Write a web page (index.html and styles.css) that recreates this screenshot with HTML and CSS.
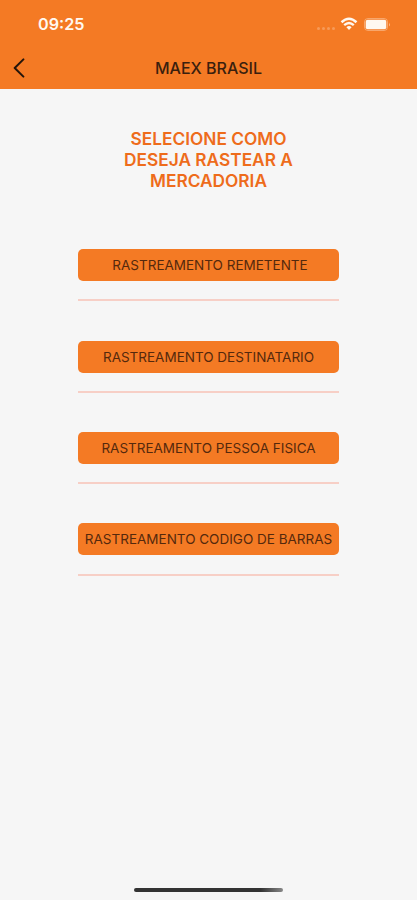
FILE: index.html
```
<!DOCTYPE html>
<html lang="pt-BR">
<head>
<meta charset="utf-8">
<meta name="viewport" content="width=device-width, initial-scale=1">
<title>MAEX BRASIL</title>
<link rel="stylesheet" href="styles.css">
</head>

<body>
<div class="screen">

<header class="header">
   <div class="status">
      <span class="clock">09:25</span>
      <div class="indicators">
         <span class="signal"><i></i><i></i><i></i><i></i></span>
         <svg class="wifi" width="18" height="14" viewBox="0 0 18 14">
            <path d="M1.5 5.2 Q9 -1.6 16.5 5.2" fill="none" stroke="currentColor" stroke-width="2.5" />
            <path d="M4.2 8.2 Q9 3.8 13.8 8.2" fill="none" stroke="currentColor" stroke-width="2.3" />
            <path d="M6.4 10.2 Q9 8 11.6 10.2 L9 13 Z" fill="currentColor" />
         </svg>
         <svg class="battery" width="27" height="13" viewBox="0 0 27 13">
            <rect x="0.5" y="0.5" width="23" height="12" rx="3.4" fill="none" stroke="currentColor" opacity="0.35" />
            <rect x="1.7" y="1.7" width="20.6" height="9.6" rx="2" fill="currentColor" />
            <path d="M25 4.5 Q26.6 6.5 25 8.5 Z" fill="currentColor" opacity="0.55" />
         </svg>
      </div>
   </div>
   <nav class="navbar">
      <a class="back" href="#" aria-label="Voltar">
         <svg width="12" height="20" viewBox="0 0 12 20">
            <path d="M10.4 1.4 L1.7 10 L10.4 18.6" fill="none" stroke="currentColor" stroke-width="2" stroke-linecap="round" stroke-linejoin="round" />
         </svg>
      </a>
      <h1 class="title">MAEX BRASIL</h1>
   </nav>
</header>

<main class="content">
   <h2 class="heading">SELECIONE COMO<br>DESEJA RASTEAR A<br>MERCADORIA</h2>
   <div class="options">
      <div class="option"><button class="btn remetente" type="button">RASTREAMENTO REMETENTE</button></div>
      <div class="option"><button class="btn destinatario" type="button">RASTREAMENTO DESTINATARIO</button></div>
      <div class="option"><button class="btn pessoa" type="button">RASTREAMENTO PESSOA FISICA</button></div>
      <div class="option"><button class="btn codigo" type="button">RASTREAMENTO CODIGO DE BARRAS</button></div>
   </div>
</main>

<div class="home_bar"></div>

</div>
</body>
</html>
```

FILE: styles.css
```
body         {margin: 0; background-color: #f6f6f6;
              font-family: Inter, "Liberation Sans", sans-serif}

.screen      {display: flex; flex-direction: column; height: 900px; overflow: hidden}

/* status bar and navigation */
.header      {height: 88.5px; background-color: #f47a24; flex: none}
.status      {display: flex; justify-content: space-between; align-items: center;
              height: 48px; padding: 0 26px 0 38px; color: #fff8f0}
.clock       {font-size: 16.2px; font-weight: 600; line-height: 20px}
.indicators  {display: flex; align-items: center}
.signal      {display: flex; gap: 2px; margin: 8px 5px 0 0}
.signal i    {width: 3px; height: 3px; border-radius: 50%; background-color: #f79a58}
.wifi        {margin-right: 6px}
.navbar      {display: grid; grid-template-columns: 40px 1fr 40px; align-items: center;
              height: 39px}
.back        {display: flex; padding-left: 13px; color: #24150b}
.title       {margin: 0; font-size: 16px; font-weight: 500; text-align: center;
              line-height: 20px; color: #3a1f0e}

/* tracking choices */
.content     {flex: 1; display: flex; flex-direction: column; align-items: center}
.heading     {margin: 39.5px 0 0; font-size: 17.3px; font-weight: 600;
              line-height: 21px; text-align: center; color: #ee6c1b}
.options     {width: 261px; margin-top: 58.2px}
.option      {height: 50.3px; margin-bottom: 39.1px; border-bottom: 2px solid #f7cfc6}
.btn         {display: block; width: 100%; height: 32px; padding: 0; border: 0;
              border-radius: 5px; background-color: #f47a24; color: #54290d;
              font-family: inherit; font-size: 13.5px; white-space: nowrap}
.remetente   {padding-left: 3px}

.home_bar    {flex: none; align-self: center; width: 149px; height: 4px; margin-bottom: 8px;
              border-radius: 2px; background: linear-gradient(to right, #333 85%, #888)}
```
